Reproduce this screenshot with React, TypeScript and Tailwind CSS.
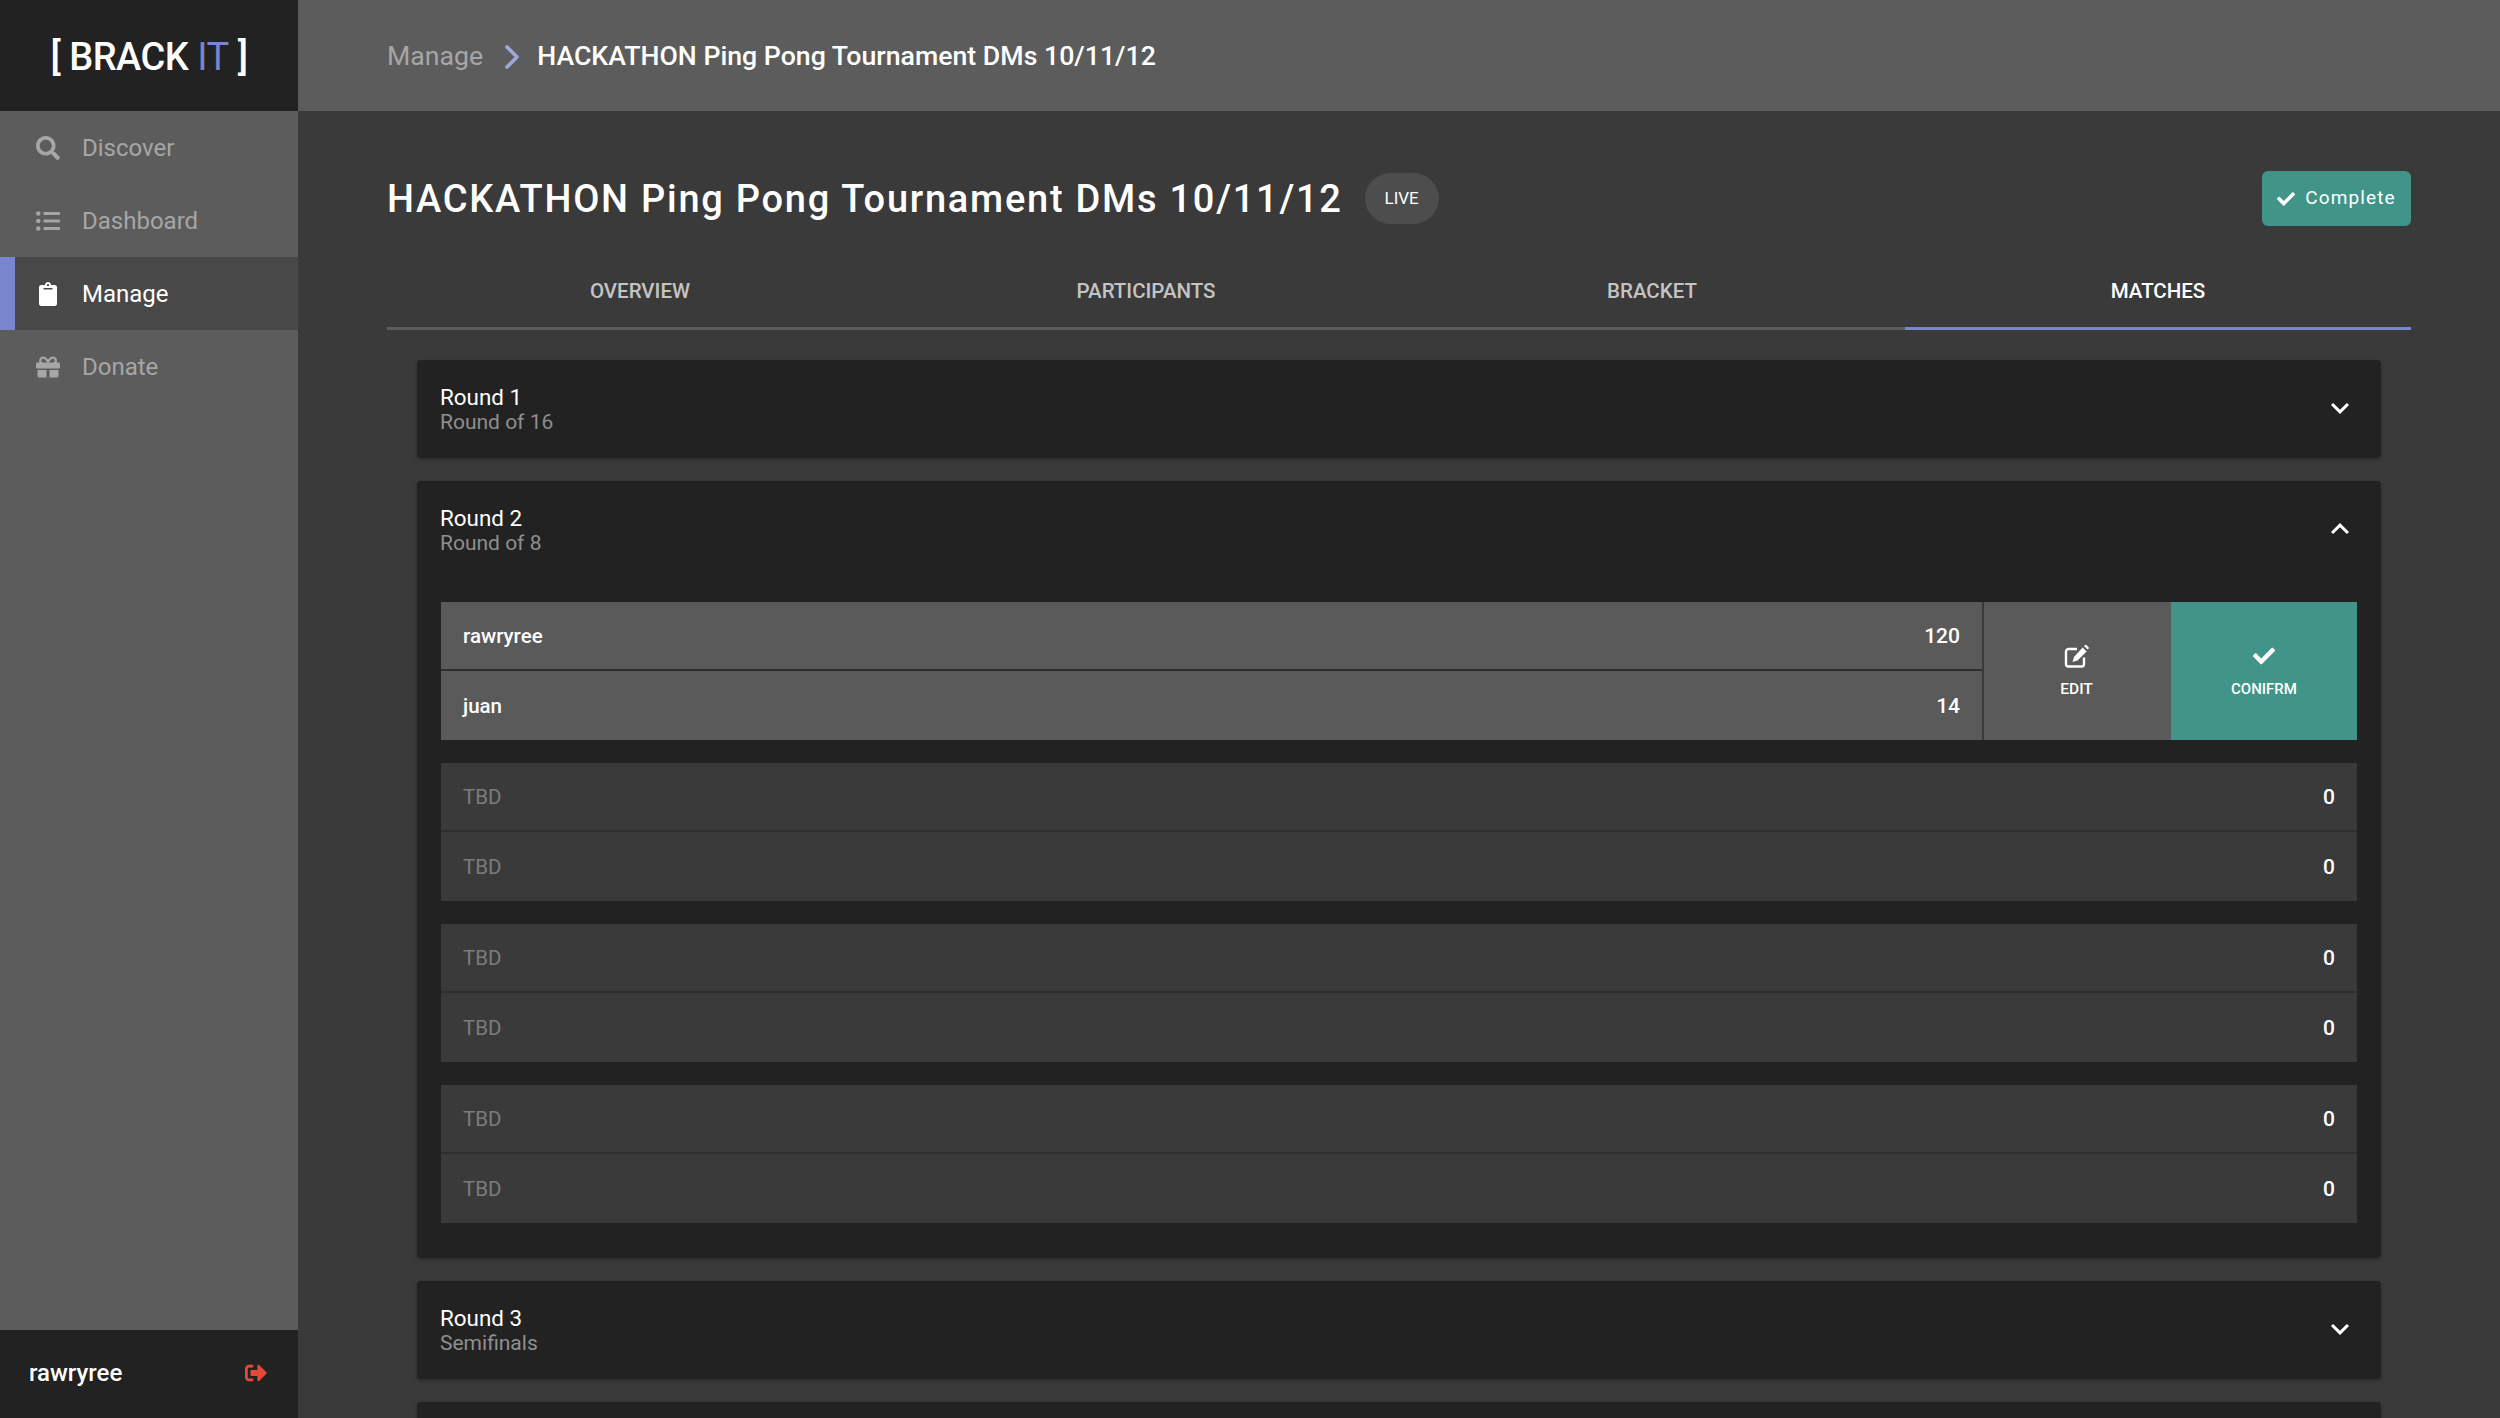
import { ChevronRight } from "lucide-react";
import { FaCheck, FaClipboard, FaGift, FaListUl, FaSearch, FaSignOutAlt } from "react-icons/fa";
import { MdExpandLess, MdExpandMore } from "react-icons/md";

const navItems = [
  { label: "Discover", icon: FaSearch },
  { label: "Dashboard", icon: FaListUl },
  { label: "Manage", icon: FaClipboard, active: true },
  { label: "Donate", icon: FaGift },
];

const tabs = ["OVERVIEW", "PARTICIPANTS", "BRACKET", "MATCHES"];

function EditIcon() {
  return (
    <svg viewBox="0 0 25 24" className="mb-[14px] h-[24px] w-[25px]" fill="none">
      <path d="M20 13.5V20a2.5 2.5 0 0 1-2.500 2.500H4.500A2.500 2.500 0 0 1 2 20V7.500A2.500 2.500 0 0 1 4.500 5H13" stroke="currentColor" strokeWidth="2.400" />
      <path d="M18.600 3.400l4 4L13.500 16.500 8.500 18l1.500-5.100z" fill="currentColor" />
      <path d="M20 2l.8-.8a1.300 1.300 0 0 1 1.800 0l1.800 1.800a1.300 1.300 0 0 1 0 1.800l-.8.8z" fill="currentColor" />
    </svg>
  );
}

function Sidebar() {
  return (
    <aside className="flex h-full w-[298px] shrink-0 flex-col bg-[#5c5c5c]">
      <div className="flex h-[111px] items-center justify-center bg-[#222222] pt-[2px] text-[38px] font-medium leading-none tracking-[-0.5px] text-white">
        <span>[ BRACK <span className="font-normal text-[#7986cb]">IT</span> ]</span>
      </div>
      <nav className="flex-1">
        {navItems.map((item) => (
          <div
            key={item.label}
            className={
              item.active
                ? "flex h-[73px] items-center border-l-[15px] border-[#7986cb] bg-[#484848] pl-[21px] text-white"
                : "flex h-[73px] items-center pl-[36px] text-[#a6a6a6]"
            }
          >
            <span className="flex w-[46px] justify-start">
              <item.icon className="h-[24px] w-[24px]" />
            </span>
            <span className="text-[24px]">{item.label}</span>
          </div>
        ))}
      </nav>
      <div className="flex h-[88px] items-center justify-between bg-[#222222] pb-[2px] pl-[29px] pr-[31px] text-[24px] font-medium text-white">
        <span>rawryree</span>
        <FaSignOutAlt className="h-[22px] w-[22px] text-[#e5493a]" />
      </div>
    </aside>
  );
}

function RoundCard({ title, subtitle, open, children }: { title?: string; subtitle?: string; open?: boolean; children?: React.ReactNode }) {
  return (
    <div className="mb-[23px] rounded-[4px] bg-[#222222] shadow-[0_2px_4px_rgba(0,0,0,0.25)]">
      <div className="flex h-[98px] items-center justify-between pl-[23px] pr-[24px]">
        <div className="pt-[2px] leading-[25px]">
          <div className="text-[22.400px] text-white">{title}</div>
          <div className="text-[21px] text-[#8f8f8f]">{subtitle}</div>
        </div>
        {open ? (
          <MdExpandLess className="mb-[2px] mr-[-1px] h-[36px] w-[36px] text-white" />
        ) : (
          <MdExpandMore className="mb-[2px] mr-[-1px] h-[36px] w-[36px] text-white" />
        )}
      </div>
      {children}
    </div>
  );
}

function Slot({ name, score, tbd, last }: { name: string; score: number; tbd?: boolean; last?: boolean }) {
  return (
    <div
      className={`flex h-[69px] items-center justify-between px-[22px] pt-[2px] text-[20.5px] font-medium ${last ? "" : "border-b-2 border-[#2e2e2e]"}`}
    >
      <span className={tbd ? "font-normal text-[#7c7c7c]" : "text-white"}>{name}</span>
      <span className="text-[21px] text-white">{score}</span>
    </div>
  );
}

function ActiveMatch() {
  return (
    <div className="flex h-[138px] bg-[#5a5a5a]">
      <div className="flex-1">
        <Slot name="rawryree" score={120} />
        <Slot name="juan" score={14} last />
      </div>
      <button className="flex w-[187px] flex-col items-center justify-center border-l-2 border-[#3a3a3a] text-white">
        <EditIcon />
        <span className="text-[15.500px] font-medium leading-none">EDIT</span>
      </button>
      <button className="ml-[2px] flex w-[186px] flex-col items-center justify-center bg-[#419488] text-white">
        <FaCheck className="mb-[15px] h-[22px] w-[22px]" />
        <span className="text-[15px] font-medium leading-none">CONIFRM</span>
      </button>
    </div>
  );
}

function PendingMatch() {
  return (
    <div className="bg-[#3a3a3a]">
      <Slot name="TBD" score={0} tbd />
      <Slot name="TBD" score={0} tbd last />
    </div>
  );
}

export default function App() {
  return (
    <div className="flex h-screen overflow-hidden bg-[#3a3a3a] font-['Roboto',sans-serif]">
      <Sidebar />
      <div className="flex min-w-0 flex-1 flex-col">
        {/* Breadcrumb */}
        <header className="flex h-[111px] shrink-0 items-center bg-[#5c5c5c] pl-[89px] pt-[2px] text-[26.700px]">
          <span className="text-[#a6a6a6]">Manage</span>
          <ChevronRight className="ml-[9px] mr-[5px] h-[40px] w-[40px] text-[#9fa8da]" strokeWidth={2.2} />
          <span className="font-medium text-white">HACKATHON Ping Pong Tournament DMs 10/11/12</span>
        </header>

        <main className="flex-1 overflow-hidden pl-[89px] pr-[89px] pt-[60px]">
          <div className="flex h-[55px] items-center justify-between">
            <div className="flex items-center">
              <h1 className="pt-[2px] text-[38px] font-medium tracking-[1.740px] text-white">
                HACKATHON Ping Pong Tournament DMs 10/11/12
              </h1>
              <span className="ml-[22px] flex h-[51px] w-[74px] items-center justify-center rounded-full bg-[#4d4d4d] text-[17px] text-white">
                LIVE
              </span>
            </div>
            <button className="flex h-[55px] w-[149px] items-center justify-center rounded-[6px] bg-[#419488] text-[19px] tracking-[1.100px] text-white">
              <FaCheck className="mr-[10px] h-[18px] w-[18px]" />
              Complete
            </button>
          </div>

          <div className="mt-[27px] grid grid-cols-4">
            {tabs.map((tab) => (
              <div
                key={tab}
                className={
                  tab === "MATCHES"
                    ? "flex h-[77px] items-center justify-center border-b-[3px] border-[#7986cb] pt-[3px] text-[20.500px] font-medium text-white"
                    : "flex h-[77px] items-center justify-center border-b-[3px] border-[#5c5c5c] pt-[3px] text-[20.500px] font-medium text-[#c4c4c4]"
                }
              >
                {tab}
              </div>
            ))}
          </div>

          <div className="px-[30px] pt-[30px]">
            <RoundCard title="Round 1" subtitle="Round of 16" />
            <RoundCard title="Round 2" subtitle="Round of 8" open>
              <div className="flex flex-col gap-[23px] px-[24px] pb-[35px] pt-[23px]">
                <ActiveMatch />
                <PendingMatch />
                <PendingMatch />
                <PendingMatch />
              </div>
            </RoundCard>
            <RoundCard title="Round 3" subtitle="Semifinals" />
            {/* next round starts below the fold */}
            <RoundCard />
          </div>
        </main>
      </div>
    </div>
  );
}
